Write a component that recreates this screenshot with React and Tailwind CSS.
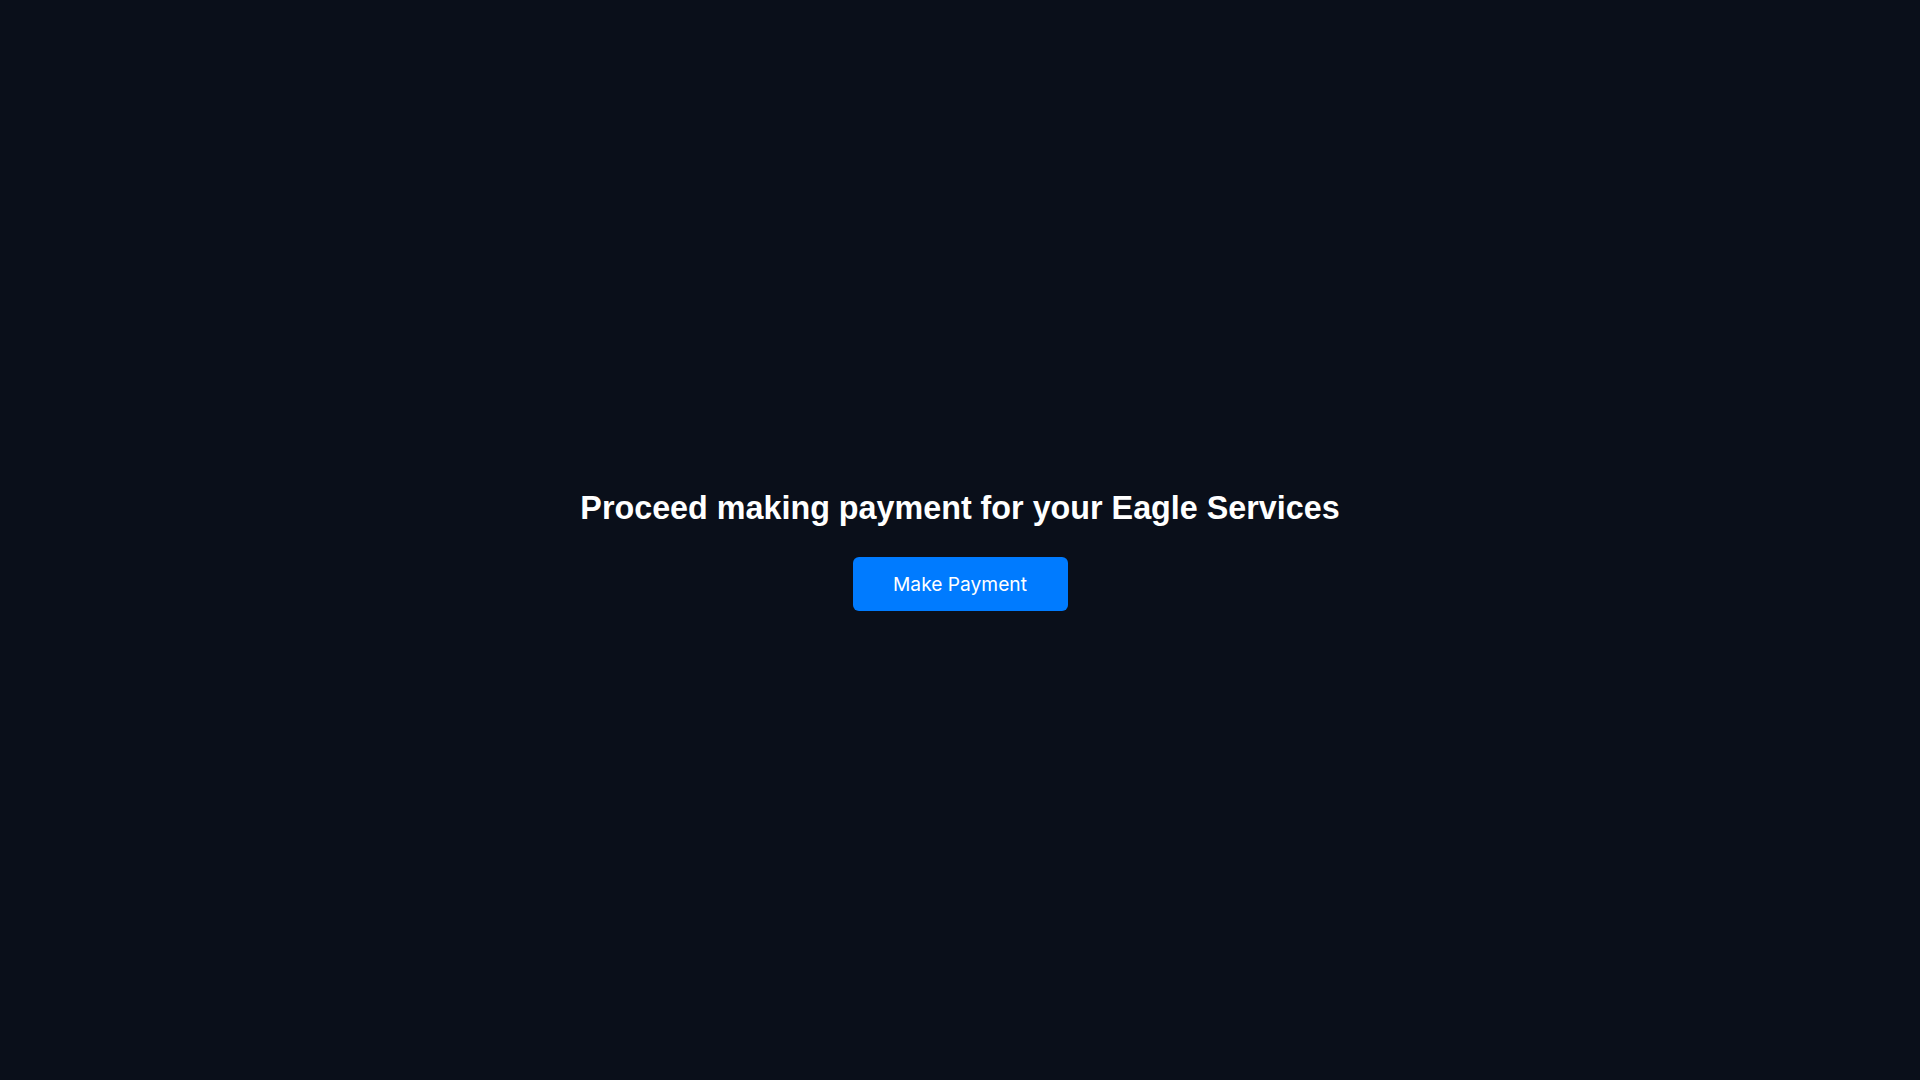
import React from "react";

const App = () => {
  return (
    <div className="min-h-screen bg-[#0a0f1a] flex flex-col items-center justify-center pt-[21px]">
      <h1 className="text-[32.3px] leading-9 font-bold text-white font-['Liberation_Sans',Arial,sans-serif]">
        Proceed making payment for your Eagle Services
      </h1>
      <button
        type="button"
        className="mt-[31px] w-[215px] h-[54px] rounded-md bg-[#007bff] text-white text-[19.2px] font-['Inter',sans-serif]"
      >
        Make Payment
      </button>
    </div>
  );
};

export default App;
